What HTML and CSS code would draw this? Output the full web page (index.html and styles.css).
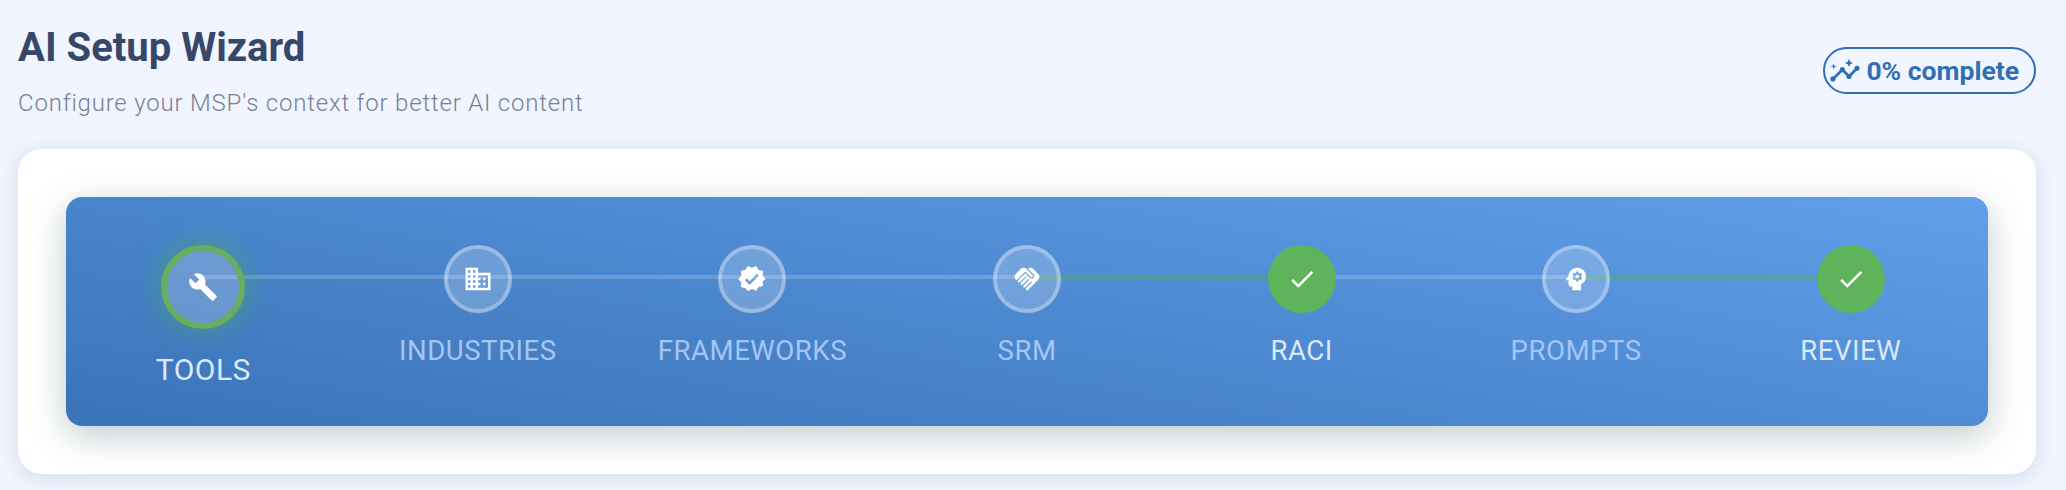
FILE: index.html
```html
<!DOCTYPE html>
<html lang="en">
<head>
<meta charset="utf-8">
<title>AI Setup Wizard</title>
<link rel="stylesheet" href="styles.css">
</head>
<body>
<main class="page">
  <header class="header">
    <div class="heading">
      <h1 class="title">AI Setup Wizard</h1>
      <p class="subtitle">Configure your MSP's context for better AI content</p>
    </div>
    <div class="chip">
      <svg class="chip-icon" viewBox="0 0 24 24"><path d="M21 8c-1.45 0-2.26 1.44-1.93 2.51l-3.55 3.56c-.3-.09-.74-.09-1.04 0l-2.55-2.55C12.27 10.45 11.46 9 10 9c-1.45 0-2.27 1.44-1.93 2.52l-4.56 4.55C2.44 15.74 1 16.55 1 18c0 1.1.9 2 2 2 1.45 0 2.26-1.44 1.93-2.51l4.55-4.56c.3.09.74.09 1.04 0l2.55 2.55C12.73 16.55 13.54 18 15 18c1.45 0 2.27-1.44 1.93-2.52l3.56-3.55c1.07.33 2.51-.48 2.51-1.93 0-1.1-.9-2-2-2z"/><path d="m15 9 .94-2.07L18 6l-2.06-.93L15 3l-.92 2.07L12 6l2.08.93zM3.5 11 4 9l2-.5L4 8l-.5-2L3 8l-2 .5L3 9z"/></svg>
      <span>0% complete</span>
    </div>
  </header>
  <section class="card">
    <ol class="stepper">
      <li class="step step-current">
        <span class="line"></span>
        <span class="dot"><svg class="icon" viewBox="0 0 24 24"><path d="M22.7 19l-9.1-9.1c.9-2.3.4-5-1.5-6.9-2-2-5-2.4-7.4-1.3L9 6 6 9 1.6 4.7C.4 7.1.9 10.1 2.9 12.1c1.9 1.9 4.6 2.4 6.9 1.5l9.1 9.1c.4.4 1 .4 1.4 0l2.3-2.3c.5-.4.5-1.1.1-1.4z"/></svg></span>
        <span class="label">Tools</span>
      </li>
      <li class="step">
        <span class="line"></span>
        <span class="dot"><svg class="icon" viewBox="0 0 24 24"><path d="M12 7V3H2v18h20V7H12zM6 19H4v-2h2v2zm0-4H4v-2h2v2zm0-4H4V9h2v2zm0-4H4V5h2v2zm4 12H8v-2h2v2zm0-4H8v-2h2v2zm0-4H8V9h2v2zm0-4H8V5h2v2zm10 12h-8v-2h2v-2h-2v-2h2v-2h-2V9h8v10zm-2-8h-2v2h2v-2zm0 4h-2v2h2v-2z"/></svg></span>
        <span class="label">Industries</span>
      </li>
      <li class="step">
        <span class="line"></span>
        <span class="dot"><svg class="icon" viewBox="0 0 24 24"><path d="M23 12l-2.44-2.79.34-3.69-3.61-.82-1.89-3.2L12 2.96 8.6 1.5 6.71 4.69 3.1 5.5l.34 3.7L1 12l2.44 2.79-.34 3.7 3.61.82L8.6 21.5l3.4-1.47 3.4 1.46 1.89-3.19 3.61-.82-.34-3.69L23 12zm-12.91 4.72l-3.8-3.81 1.48-1.48 2.32 2.33 5.85-5.87 1.48 1.48-7.33 7.35z"/></svg></span>
        <span class="label">Frameworks</span>
      </li>
      <li class="step">
        <span class="line line-done"></span>
        <span class="dot"><svg class="icon" viewBox="0 0 24 24"><path d="M16.48 10.41c-.39.39-1.04.39-1.43 0l-4.47-4.46-7.05 7.04-.66-.63c-1.17-1.17-1.17-3.07 0-4.24l4.24-4.24c1.17-1.17 3.07-1.17 4.24 0L16.48 9c.39.39.39 1.02 0 1.41zm.7-2.12c.78.78.78 2.05 0 2.83-1.27 1.27-2.61.22-2.83 0l-3.76-3.76-5.57 5.57c-.39.39-.39 1.02 0 1.41.39.39 1.02.39 1.42 0l4.62-4.62.71.71-4.62 4.62c-.39.39-.39 1.02 0 1.41.39.39 1.02.39 1.42 0l4.62-4.62.71.71-4.62 4.62c-.39.39-.39 1.02 0 1.41.39.39 1.02.39 1.41 0l4.62-4.62.71.71-4.62 4.62c-.39.39-.39 1.02 0 1.41.39.39 1.02.39 1.41 0l8.32-8.34c1.17-1.17 1.17-3.07 0-4.24l-4.24-4.24c-1.15-1.15-3.01-1.17-4.18-.06l4.47 4.47z"/></svg></span>
        <span class="label">SRM</span>
      </li>
      <li class="step step-done">
        <span class="line"></span>
        <span class="dot"><svg class="icon" viewBox="0 0 24 24"><path d="M9 16.17 4.83 12l-1.42 1.41L9 19 21 7l-1.41-1.41z"/></svg></span>
        <span class="label">RACI</span>
      </li>
      <li class="step">
        <span class="line line-done"></span>
        <span class="dot"><svg class="icon" viewBox="0 0 24 24"><path d="M13 3C9.25 3 6.2 5.94 6.02 9.64L4.1 12.2c-.25.33-.01.8.4.8H6v3c0 1.1.9 2 2 2h1v3h7v-4.68c2.36-1.12 4-3.53 4-6.32 0-3.87-3.13-7-7-7zm3 7c0 .13-.01.26-.02.39l.83.66c.08.06.1.16.05.25l-.8 1.39c-.05.09-.16.12-.24.09l-.99-.4c-.21.16-.43.29-.67.39L14 13.83c-.01.1-.1.17-.2.17h-1.6c-.1 0-.18-.07-.2-.17l-.15-1.06c-.25-.1-.47-.23-.68-.39l-.99.4c-.09.03-.2 0-.25-.09l-.8-1.39c-.05-.08-.03-.19.05-.25l.84-.66c-.01-.13-.02-.26-.02-.39s.02-.27.04-.39l-.85-.66c-.08-.06-.1-.16-.05-.26l.8-1.38c.05-.09.15-.12.24-.09l1 .4c.2-.15.43-.29.67-.39L12 6.17c.02-.1.1-.17.2-.17h1.6c.1 0 .18.07.2.17l.15 1.06c.24.1.46.23.67.39l1-.4c.09-.03.2 0 .24.09l.8 1.38c.05.09.03.2-.05.26l-.85.66c.03.12.04.25.04.39z"/><path d="M13 8.57c-.79 0-1.43.64-1.43 1.43s.64 1.43 1.43 1.43 1.43-.64 1.43-1.43-.64-1.43-1.43-1.43z"/></svg></span>
        <span class="label">Prompts</span>
      </li>
      <li class="step step-done">
        <span class="dot"><svg class="icon" viewBox="0 0 24 24"><path d="M9 16.17 4.83 12l-1.42 1.41L9 19 21 7l-1.41-1.41z"/></svg></span>
        <span class="label">Review</span>
      </li>
    </ol>
  </section>
</main>
</body>
</html>
```
FILE: styles.css
```css
* { box-sizing: border-box; }
html, body { margin: 0; height: 100%; }
body {
  background: #f0f5ff;
  font-family: Roboto, "Liberation Sans", sans-serif;
  overflow: hidden;
}
.page { padding: 18px 30px 0 18px; }
.header {
  display: flex;
  justify-content: space-between;
  align-items: center;
  height: 131px;
  padding-bottom: 29px;
}
.heading { display: flex; flex-direction: column; gap: 11px; }
.title {
  margin: 0;
  font-size: 40px;
  line-height: 56px;
  font-weight: 700;
  color: #36476a;
}
.subtitle {
  margin: 0;
  font-size: 24px;
  line-height: 32px;
  font-weight: 300;
  letter-spacing: 0.8px;
  color: #7a7f96;
}
.chip {
  display: flex;
  align-items: center;
  gap: 5px;
  height: 47px;
  margin-top: 3px;
  padding: 0 15px 0 4px;
  border: 2px solid #306fb5;
  border-radius: 24px;
  color: #306fb5;
  font-size: 26.5px;
  font-weight: 700;
}
.chip-icon { width: 32px; height: 32px; fill: currentColor; }
.card {
  height: 325px;
  padding: 48px;
  background: #fff;
  border-radius: 24px;
  box-shadow: 0 4px 20px rgba(50, 70, 110, 0.14);
}
.stepper {
  display: grid;
  grid-template-columns: repeat(7, 1fr);
  align-items: start;
  height: 229px;
  margin: 0;
  padding: 48px 0 0;
  list-style: none;
  border-radius: 16px;
  background: linear-gradient(10deg, #3a73b7, #609fea);
  box-shadow: 0 10px 36px rgba(0, 50, 60, 0.25);
}
.step {
  position: relative;
  display: flex;
  flex-direction: column;
  align-items: center;
}
.line {
  position: absolute;
  top: 30px;
  left: 50%;
  width: 100%;
  height: 4px;
  background: rgba(255, 255, 255, 0.18);
}
.line-done { background: rgba(76, 175, 80, 0.5); }
.dot {
  position: relative;
  z-index: 1;
  display: flex;
  align-items: center;
  justify-content: center;
  width: 68px;
  height: 68px;
  border: 4px solid rgba(255, 255, 255, 0.3);
  border-radius: 50%;
  background: rgba(255, 255, 255, 0.2);
}
.icon { width: 30px; height: 30px; fill: #fff; }
.label {
  margin-top: 21px;
  font-size: 27.6px;
  line-height: 34px;
  letter-spacing: 0.5px;
  text-transform: uppercase;
  color: #a4c6f6;
}
.step-done .dot { border: 0; background: #5fb45b; }
.step-done .label { color: #dbe8f9; }
.step-current .dot {
  width: 84px;
  height: 84px;
  border: 6px solid #68ad60;
  box-shadow: 0 0 28px rgba(76, 175, 80, 0.6);
}
.step-current .label {
  margin-top: 22px;
  font-size: 30px;
  line-height: 38px;
  color: #dbe8f9;
}
```
